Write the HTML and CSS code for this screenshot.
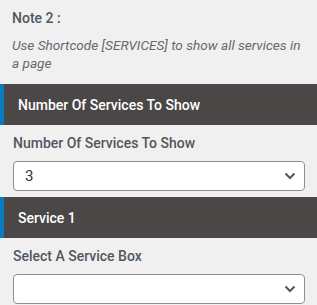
FILE: index.html
```html
<!DOCTYPE html>
<html lang="en">
<head>
    <meta charset="UTF-8">
    <title>Services</title>
    <link rel="stylesheet" href="styles.css">
</head>
<body>
    <div class="note">
        <h4 class="note-title">Note 2 :</h4>
        <p class="note-text">Use Shortcode [SERVICES] to show all services in a page</p>
    </div>

    <div class="section-head">Number Of Services To Show</div>
    <div class="field">
        <label class="field-label">Number Of Services To Show</label>
        <div class="select">
            <span class="select-value">3</span>
            <svg class="chevron" width="12" height="8" viewBox="0 0 12 8"><path d="M1.5 1.5 L6 6 L10.5 1.5" fill="none" stroke="#50575e" stroke-width="2"/></svg>
        </div>
    </div>

    <div class="section-head">Service 1</div>
    <div class="field">
        <label class="field-label">Select A Service Box</label>
        <div class="select">
            <span class="select-value"></span>
            <svg class="chevron" width="12" height="8" viewBox="0 0 12 8"><path d="M1.5 1.5 L6 6 L10.5 1.5" fill="none" stroke="#50575e" stroke-width="2"/></svg>
        </div>
    </div>
</body>
</html>
```

FILE: styles.css
```css
body {
    margin: 0;
    padding: 0;
    background: #f0f0f1;
    font-family: Roboto, 'Liberation Sans', sans-serif;
    color: #50575e;
}
.note {
    padding: 8px 12px 0 12px;
}
.note-title {
    margin: 0;
    font-size: 14px;
    font-weight: 500;
    line-height: 20px;
    color: #50575e;
}
.note-text {
    margin: 8px 0 12px 0;
    font-size: 13.6px;
    font-style: italic;
    line-height: 18px;
    color: #646970;
}
.section-head {
    display: flex;
    align-items: center;
    height: 41px;
    padding-left: 14px;
    border-left: 4px solid #0a7ac0;
    background: #4b4747;
    color: #ffffff;
    font-size: 14px;
    font-weight: 500;
}
.field {
    padding: 8px 12px 6px 13px;
}
.field-label {
    display: block;
    font-size: 14px;
    font-weight: 500;
    line-height: 20px;
    margin-bottom: 8px;
}
.select {
    display: flex;
    align-items: center;
    justify-content: space-between;
    height: 30px;
    box-sizing: border-box;
    padding: 0 8px 0 11px;
    background: #ffffff;
    border: 1px solid #8c8f94;
    border-radius: 4px;
    font-size: 15px;
    color: #2c3338;
}
.chevron {
    display: block;
}
```
